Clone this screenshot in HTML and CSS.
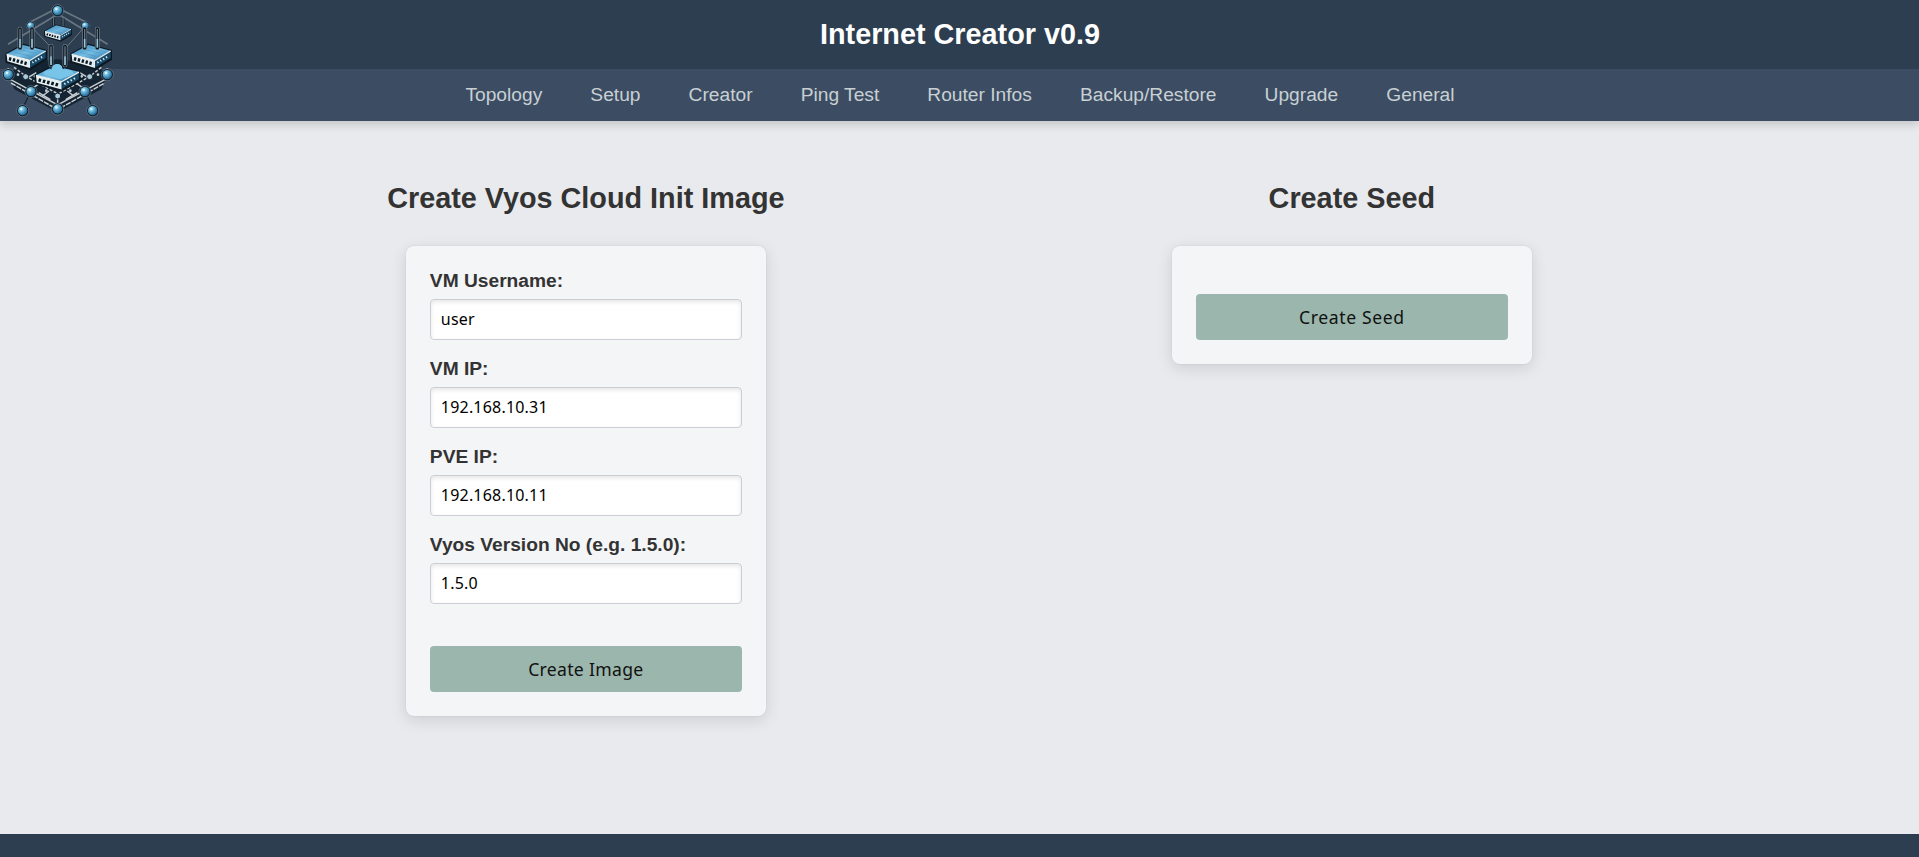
FILE: index.html
```html
<!DOCTYPE html>
<html lang="en">
<head>
<meta charset="utf-8">
<title>Internet Creator v0.9</title>
<link rel="stylesheet" href="styles.css">
</head>
<body>
<header class="site-header">
  <div class="title-bar"><h1 class="title">Internet Creator v0.9</h1></div>
  <nav class="nav">
    <a class="nav-link">Topology</a>
    <a class="nav-link">Setup</a>
    <a class="nav-link">Creator</a>
    <a class="nav-link">Ping Test</a>
    <a class="nav-link">Router Infos</a>
    <a class="nav-link">Backup/Restore</a>
    <a class="nav-link">Upgrade</a>
    <a class="nav-link">General</a>
  </nav>
  <svg class="logo" viewBox="0 0 360 375" aria-hidden="true">
    <defs>
      <radialGradient id="ball" cx=".35" cy=".3" r=".75">
        <stop offset="0" stop-color="#b9e4f4"/><stop offset=".4" stop-color="#64b2d8"/><stop offset="1" stop-color="#1b5b87"/>
      </radialGradient>
      <linearGradient id="lid" x1="0" y1="0" x2="1" y2="1">
        <stop offset="0" stop-color="#3584b6"/><stop offset=".5" stop-color="#74bde3"/><stop offset="1" stop-color="#2d78ac"/>
      </linearGradient>
      <g id="node">
        <circle r="18" fill="#0c1a27" stroke="#8798a5" stroke-width="1.5"/>
        <circle r="14" fill="url(#ball)"/>
        <circle cx="-4" cy="-5" r="3.5" fill="#d9f1fa"/>
      </g>
      <g id="antenna">
        <path d="M0 0V56" stroke="#8493a0" stroke-width="14" stroke-linecap="round"/>
        <path d="M0 0V56" stroke="#0c1822" stroke-width="11" stroke-linecap="round"/>
        <path d="M0 0V30" stroke="#667582" stroke-width="4"/>
        <path d="M0 30V56" stroke="#9fc9dc" stroke-width="5"/>
      </g>
      <g id="router">
        <path d="M0 28L50 0L117 18V42L70 71L0 50Z" fill="#0c1822" stroke="#0c1822" stroke-width="8" stroke-linejoin="round"/>
        <path d="M0 28L70 46V69L2 49Z" fill="#e6f0f3"/>
        <path d="M70 46L117 18V39L70 68Z" fill="#174969"/>
        <path d="M0 27L50 0L117 17L69 44Z" fill="url(#lid)"/>
        <path d="M0 28L70 46L117 18" fill="none" stroke="#e6f0f3" stroke-width="4"/>
        <path d="M7 41L65 57" stroke="#0c1822" stroke-width="10" stroke-dasharray="7 5"/>
        <path d="M77 53L111 33" stroke="#d7e7ed" stroke-width="6" stroke-dasharray="4 6"/>
        <path d="M25 22L72 34M40 14L90 25M53 8L100 20" stroke="#397da9" stroke-width="1.5" opacity=".6"/>
      </g>
    </defs>
    <path d="M24 224L65 190L173 178L282 190L323 224L304 268L173 337L43 268Z" fill="#142432"/>
    <g fill="none" stroke="#697681" stroke-width="5">
      <path d="M24 133L174 42L323 133M92 65L173 24L256 65"/>
      <path d="M92 78L154 143M256 78L198 143" stroke-width="3"/>
      <path d="M92 275L68 325M256 275L278 325" stroke="#172531" stroke-width="4"/>
    </g>
    <g fill="none" stroke="#c8cfd2" stroke-width="4.5">
      <path d="M25 204V235L173 315L322 235V204"/>
      <path d="M33 249L173 329L314 249" stroke-dasharray="16 3"/>
      <path d="M42 202L78 229L119 252L169 279M304 202L270 229L229 252L179 279" stroke-dasharray="9 5"/>
      <path d="M80 235L109 218M96 266L126 245M127 288L147 273M268 235L239 218M252 266L222 245M221 288L202 273"/>
      <path d="M116 278L151 299M232 278L197 299M173 287V308"/>
    </g>
    <g fill="#c5d3da"><circle cx="54" cy="224" r="4"/><circle cx="294" cy="224" r="4"/><circle cx="105" cy="229" r="4"/><circle cx="245" cy="229" r="4"/><circle cx="139" cy="272" r="4"/><circle cx="211" cy="272" r="4"/></g>
    <g transform="translate(135 76)">
      <path d="M25 -22V8M54 -22V8" stroke="#101c26" stroke-width="8"/>
      <path d="M25 -22V8M54 -22V8" stroke="#71808b" stroke-width="3"/>
      <use href="#router" transform="scale(.67 .65)"/>
    </g>
    <use href="#node" x="173" y="32"/>
    <use href="#node" transform="translate(92 77) scale(.75)"/>
    <use href="#node" transform="translate(256 77) scale(.75)"/>
    <use href="#router" x="20" y="135"/>
    <use href="#router" x="215" y="135"/>
    <use href="#antenna" x="60" y="87"/><use href="#antenna" x="96" y="87"/>
    <use href="#antenna" x="254" y="87"/><use href="#antenna" x="292" y="87"/>
    <use href="#router" transform="translate(108 198) scale(1.1 1.02)"/>
    <path d="M129 222C132 211 145 206 156 210C155 184 187 183 189 210C204 205 219 211 222 222L180 238Z" fill="#79c5ea"/>
    <path d="M152 207C156 185 187 184 190 207" fill="none" stroke="#0c1822" stroke-width="3"/>
    <use href="#antenna" x="153" y="139"/><use href="#antenna" x="195" y="139"/>
    <use href="#node" x="25" y="224"/><use href="#node" x="322" y="224"/>
    <use href="#node" x="93" y="275"/><use href="#node" x="255" y="275"/>
    <use href="#node" x="173" y="327"/>
    <use href="#node" x="68" y="332"/><use href="#node" x="278" y="332"/>
    <g fill="#a9c9da" stroke="#101e2a" stroke-width="3"><circle cx="77" cy="230" r="9"/><circle cx="269" cy="230" r="9"/><circle cx="173" cy="288" r="9"/></g>
  </svg>
</header>
<main class="content">
  <section class="panel">
    <h2 class="panel-title">Create Vyos Cloud Init Image</h2>
    <form class="card">
      <label class="label" for="username">VM Username:</label>
      <input class="input" id="username" type="text" value="user">
      <label class="label" for="vm-ip">VM IP:</label>
      <input class="input" id="vm-ip" type="text" value="192.168.10.31">
      <label class="label" for="pve-ip">PVE IP:</label>
      <input class="input" id="pve-ip" type="text" value="192.168.10.11">
      <label class="label" for="version">Vyos Version No (e.g. 1.5.0):</label>
      <input class="input" id="version" type="text" value="1.5.0">
      <button class="button" type="button">Create Image</button>
    </form>
  </section>
  <section class="panel">
    <h2 class="panel-title">Create Seed</h2>
    <form class="card">
      <button class="button button-wide" type="button">Create Seed</button>
    </form>
  </section>
</main>
<footer class="footer"></footer>
</body>
</html>
```
FILE: styles.css
```css
* { box-sizing: border-box; }

body {
  margin: 0;
  height: 100vh;
  display: flex;
  flex-direction: column;
  overflow: hidden;
  background: #e8eaed;
  color: #333;
  font-family: "Liberation Sans", Arial, sans-serif;
}

.site-header {
  position: relative;
  flex: none;
  box-shadow: 0 4px 8px rgba(0, 0, 0, 0.15);
}

.title-bar {
  height: 69px;
  padding-left: 1px;
  display: flex;
  align-items: center;
  justify-content: center;
  background: #2d3e50;
}

.title {
  margin: 0;
  color: #fff;
  font-size: 28.8px;
  line-height: 33px;
}

.nav {
  height: 52px;
  padding-left: 1px;
  display: flex;
  align-items: center;
  justify-content: center;
  gap: 48.1px;
  background: #3c4d63;
}

.nav-link {
  color: #c8d0d4;
  font-size: 19.2px;
  line-height: 22px;
}

.logo {
  position: absolute;
  left: 0;
  top: 0;
  width: 120px;
  height: 125px;
}

.content {
  flex: 1;
  width: 1532px;
  margin: 0 auto;
  padding-top: 61px;
  display: flex;
  justify-content: space-around;
  align-items: flex-start;
}

.panel {
  display: flex;
  flex-direction: column;
  align-items: center;
}

.panel-title {
  margin: 0 0 31px;
  font-size: 28.8px;
  line-height: 33px;
}

.card {
  width: 360px;
  padding: 24px;
  display: flex;
  flex-direction: column;
  background: #f4f5f7;
  border-radius: 8px;
  box-shadow: 0 4px 16px rgba(0, 0, 0, 0.12), 0 0 2px rgba(0, 0, 0, 0.1);
}

.label {
  margin-bottom: 7px;
  font-size: 19.2px;
  font-weight: bold;
  line-height: 22px;
}

.input {
  width: 100%;
  height: 41px;
  margin-bottom: 18px;
  padding: 0 10px 2px;
  border: 1px solid #cbcfd5;
  border-radius: 4px;
  background: #fff;
  color: #000;
  box-shadow: inset 0 2px 4px rgba(0, 0, 0, 0.1);
  font: 16px "Noto Sans", sans-serif;
  letter-spacing: 0.2px;
}

.button {
  height: 46px;
  margin-top: 24px;
  padding: 0;
  border: 0;
  border-radius: 4px;
  background: #9bb6ac;
  color: #111;
  font: 17.6px "Noto Sans", sans-serif;
  letter-spacing: 0.3px;
}

.button-wide {
  letter-spacing: 0.6px;
}

.footer {
  flex: none;
  height: 23px;
  background: #2d3e50;
}
```
